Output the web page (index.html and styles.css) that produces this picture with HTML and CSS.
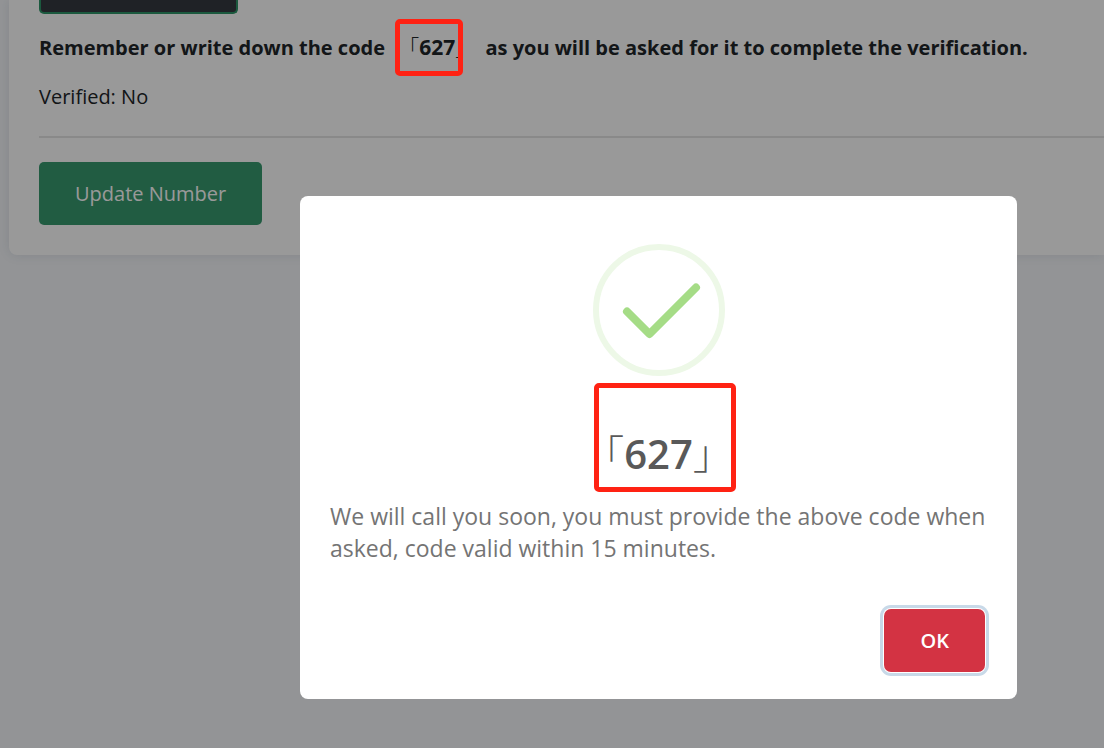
FILE: index.html
```html
<!DOCTYPE html>
<html lang="en">
<head>
<meta charset="utf-8">
<meta name="viewport" content="width=device-width, initial-scale=1">
<title>Phone verification</title>
<link rel="stylesheet" href="styles.css">
</head>
<body>
<main class="card">
  <button class="call-button" type="button" aria-label="Call me"></button>
  <p class="reminder">Remember or write down the code <span class="code code-inline"><span class="bracket">「</span>627<span class="bracket">」</span><span class="mark mark-inline"></span></span> as you will be asked for it to complete the verification.</p>
  <p class="status">Verified: No</p>
  <hr class="divider">
  <button class="update-button" type="button">Update Number</button>
</main>
<div class="overlay">
  <section class="modal" role="dialog" aria-modal="true" aria-labelledby="modal-title">
    <svg class="success-icon" viewBox="0 0 132 132" aria-hidden="true">
      <circle cx="66" cy="66" r="63" fill="none" stroke="#edf8e7" stroke-width="6"/>
      <path d="M34 67.500 56.500 90 103 43.500" fill="none" stroke="#a5dc86" stroke-width="8" stroke-linecap="round" stroke-linejoin="round"/>
    </svg>
    <h2 class="modal-title" id="modal-title"><span class="code"><span class="bracket">「</span>627<span class="bracket">」</span><span class="mark mark-title"></span></span></h2>
    <p class="modal-text">We will call you soon, you must provide the above code when asked, code valid within 15 minutes.</p>
    <div class="modal-footer"><button class="ok-button" type="button">OK</button></div>
  </section>
</div>
</body>
</html>
```

FILE: styles.css
```css
* { box-sizing: border-box; }
body {
  margin: 0;
  min-height: 100vh;
  overflow: hidden;
  background: #f5f7fa;
  color: #212529;
  font-family: "Open Sans", "Noto Sans CJK SC", sans-serif;
  font-size: 20px;
  line-height: 32px;
}
button { font-family: inherit; }
.card {
  margin-left: 9px;
  padding: 0 0 30px 30px;
  background: #fff;
  border-radius: 0 0 0 8px;
  box-shadow: 0 0 12px rgba(40, 60, 90, .12);
}
.call-button {
  display: block;
  width: 199px;
  height: 14px;
  background: #343a40;
  border: 2px solid #2d9568;
  border-top: 0;
  border-radius: 0 0 5px 5px;
}
.reminder {
  margin: 0;
  padding: 16px 0 17px;
  font-weight: 700;
  white-space: nowrap;
}
.code { position: relative; }
.code-inline { margin: 0 4px 0 8px; font-size: 21px; }
.bracket { font-family: "Noto Sans CJK SC", sans-serif; font-weight: 300; }
.status { margin: 0; }
.divider {
  margin: 23px 0 24px;
  border: 0;
  border-top: 2px solid #e4e4e4;
}
.update-button {
  display: block;
  padding: 15px 36px;
  background: #37996f;
  color: #fff;
  border: 0;
  border-radius: 5px;
  font-size: 20px;
  line-height: 33px;
}
.overlay {
  position: fixed;
  inset: 0;
  display: flex;
  align-items: flex-start;
  padding: 196px 87px 40px 300px;
  background: rgba(0, 0, 0, .4);
}
.modal {
  flex: 1;
  padding: 48px 30px 27px;
  background: #fff;
  border-radius: 8px;
}
.success-icon {
  display: block;
  width: 132px;
  height: 132px;
  margin: 0 auto;
}
.modal-title {
  margin: 0;
  padding: 50px 0 20px;
  color: #595959;
  font-size: 40px;
  font-weight: 600;
  line-height: 52px;
  text-align: center;
}
.modal-text {
  margin: 0;
  color: #747474;
  font-size: 23px;
  line-height: 32px;
}
.modal-footer {
  display: flex;
  justify-content: flex-end;
  padding: 45px 2px 0 0;
}
.ok-button {
  padding: 15px 36px;
  background: #d33343;
  color: #fff;
  border: 0;
  border-radius: 7px;
  box-shadow: 0 0 0 1px #fff, 0 0 0 4px #c8d9e8;
  font-size: 20px;
  font-weight: 600;
  line-height: 33px;
}
.mark {
  position: absolute;
  z-index: 10;
  border: 5px solid #ff2213;
  border-radius: 5px;
}
.mark-inline { width: 68px; height: 57px; top: -14px; left: -3px; }
.mark-title { width: 142px; height: 109px; top: -43px; left: 10px; }
```
